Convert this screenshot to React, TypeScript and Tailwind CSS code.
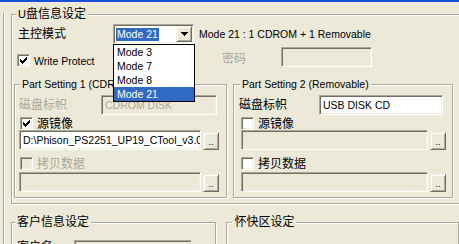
import React from "react";

const sunken =
  "border border-t-[#ACA899] border-l-[#ACA899] border-b-white border-r-white shadow-[inset_1px_1px_0_#716F64,inset_-1px_-1px_0_#F1EFE2]";
const raised =
  "border border-t-[#F1EFE2] border-l-[#F1EFE2] border-b-[#716F64] border-r-[#716F64] shadow-[inset_1px_1px_0_#fff,inset_-1px_-1px_0_#ACA899]";
const etched = "border border-[#ACA899] shadow-[inset_1px_1px_0_#fff,1px_1px_0_#fff]";

function Check({ checked, disabled }: { checked?: boolean; disabled?: boolean }) {
  return (
    <div
      className={`w-[13px] h-[13px] shrink-0 flex items-center justify-center ${sunken} ${
        disabled ? "bg-[#ECE9D8]" : "bg-white"
      }`}
    >
      {checked && (
        <svg width="7" height="7" viewBox="0 0 7 7" shapeRendering="crispEdges">
          <path d="M6 0h1v3h-1zM5 1h1v3h-1zM4 2h1v3h-1zM3 3h1v3h-1zM2 4h1v3h-1zM1 3h1v3h-1zM0 2h1v3h-1z" fill="#000" />
        </svg>
      )}
    </div>
  );
}

function Btn() {
  return (
    <div className={`w-[16px] h-[18px] shrink-0 bg-[#ECE9D8] flex items-end justify-center ${raised}`}>
      <span className="text-[9px] leading-[12px] mb-[1px] text-black">..</span>
    </div>
  );
}

function Field({
  w,
  text,
  disabled,
}: {
  w: string;
  text?: string;
  disabled?: boolean;
}) {
  return (
    <div
      className={`${w} h-[20px] shrink-0 flex items-center overflow-hidden whitespace-nowrap pl-[3px] ${sunken} ${
        disabled ? "bg-[#ECE9D8] text-[#ACA899]" : "bg-white text-black"
      }`}
    >
      <span className="text-[10.5px] leading-[14px]">{text}</span>
    </div>
  );
}

function Title({ children, left }: { children: React.ReactNode; left: string }) {
  return (
    <span
      className={`absolute -top-[8px] ${left} px-[2px] bg-[#ECE9D8] leading-[14px] whitespace-nowrap text-black`}
    >
      {children}
    </span>
  );
}

export default function App() {
  return (
    <div className="w-[459px] h-[244px] overflow-hidden bg-[#ECE9D8] flex flex-col font-['Liberation_Sans','Noto_Sans_CJK_SC',sans-serif] text-[10.5px] text-black">
      <div className="h-[2px] shrink-0 bg-[#1B4FD8]" />
      <div className="mt-[11px] ml-[3px] flex-1 flex flex-col border-l border-[#ACA899] shadow-[inset_1px_0_0_#fff] pl-[7px] pt-[1px]">
        {/* U盘信息设定 */}
        <div className={`relative w-[470px] h-[190px] shrink-0 flex flex-col ${etched}`}>
          <Title left="left-[4px]">
            <span className="text-[11px]">U</span>
            <span className="text-[12px]">盘信息设定</span>
          </Title>

          {/* row 1 */}
          <div className="mt-[9px] ml-[6px] h-[20px] flex items-center">
            <span className="w-[95px] text-[12px] leading-[14px]">主控模式</span>
            <div className="relative w-[81px] h-[20px] z-10">
              <div className={`w-full h-full bg-white flex items-center justify-between ${sunken}`}>
                <span className="ml-[2px] px-[1px] bg-[#316AC5] text-white leading-[13px]">Mode 21</span>
                <div className={`w-[16px] h-[16px] mr-[1px] bg-[#ECE9D8] flex items-center justify-center ${raised}`}>
                  <svg width="7" height="4" viewBox="0 0 7 4" shapeRendering="crispEdges">
                    <path d="M0 0h7v1h-7zM1 1h5v1h-5zM2 2h3v1h-3zM3 3h1v1h-1z" fill="#000" />
                  </svg>
                </div>
              </div>
              <div className="absolute left-0 top-[20px] w-[82px] border border-black bg-white flex flex-col">
                <div className="h-[14px] leading-[14px] pl-[3px]">Mode 3</div>
                <div className="h-[14px] leading-[14px] pl-[3px]">Mode 7</div>
                <div className="h-[14px] leading-[14px] pl-[3px]">Mode 8</div>
                <div className="h-[14px] leading-[14px] pl-[3px] bg-[#316AC5] text-white">Mode 21</div>
              </div>
            </div>
            <span className="ml-[5px] leading-[14px] whitespace-nowrap">Mode 21 : 1 CDROM + 1 Removable</span>
          </div>

          {/* row 2 */}
          <div className="mt-[3px] ml-[5px] h-[20px] flex">
            <div className="mt-[7px] w-[205px] h-[13px] flex items-center">
              <Check checked />
              <span className="ml-[4px] leading-[14px]">Write Protect</span>
            </div>
            <span className="mt-[5px] w-[59px] text-[12px] leading-[14px] text-[#ACA899]">密码</span>
            <Field w="w-[91px]" disabled />
          </div>

          {/* part settings */}
          <div className="mt-[17px] ml-[2px] flex">
            <div className={`relative w-[213px] h-[114px] flex flex-col ${etched}`}>
              <Title left="left-[5px]">Part Setting 1 (CDROM)</Title>
              <div className="mt-[10px] ml-[4px] h-[20px] flex items-center">
                <span className="w-[82px] text-[12px] leading-[14px] text-[#ACA899]">磁盘标帜</span>
                <Field w="w-[116px]" text="CDROM DISK" disabled />
              </div>
              <div className="mt-[2px] ml-[5px] h-[13px] flex items-center">
                <Check checked />
                <span className="ml-[4px] text-[12px] leading-[14px]">源镜像</span>
              </div>
              <div className="ml-[4px] h-[20px] flex items-end">
                <Field w="w-[182px]" text="D:\Phison_PS2251_UP19_CTool_v3.0\Image\CDROM.iso" />
                <div className="ml-[2px]">
                  <Btn />
                </div>
              </div>
              <div className="mt-[7px] ml-[5px] h-[13px] flex items-center">
                <Check disabled />
                <span className="ml-[4px] text-[12px] leading-[14px] text-[#ACA899]">拷贝数据</span>
              </div>
              <div className="mt-[2px] ml-[4px] h-[20px] flex items-end">
                <Field w="w-[182px]" disabled />
                <div className="ml-[2px]">
                  <Btn />
                </div>
              </div>
            </div>

            <div className={`relative ml-[6px] w-[220px] h-[114px] flex flex-col ${etched}`}>
              <Title left="left-[6px]">Part Setting 2 (Removable)</Title>
              <div className="mt-[10px] ml-[5px] h-[20px] flex items-center">
                <span className="w-[80px] text-[12px] leading-[14px]">磁盘标帜</span>
                <Field w="w-[124px]" text="USB DISK CD" />
              </div>
              <div className="mt-[2px] ml-[7px] h-[13px] flex items-center">
                <Check />
                <span className="ml-[4px] text-[12px] leading-[14px]">源镜像</span>
              </div>
              <div className="ml-[7px] h-[20px] flex items-end">
                <Field w="w-[187px]" disabled />
                <div className="ml-[2px]">
                  <Btn />
                </div>
              </div>
              <div className="mt-[7px] ml-[7px] h-[13px] flex items-center">
                <Check />
                <span className="ml-[4px] text-[12px] leading-[14px]">拷贝数据</span>
              </div>
              <div className="mt-[2px] ml-[7px] h-[20px] flex items-end">
                <Field w="w-[187px]" disabled />
                <div className="ml-[2px]">
                  <Btn />
                </div>
              </div>
            </div>
          </div>
        </div>

        {/* bottom groups */}
        <div className="mt-[18px] flex shrink-0">
          <div className={`relative w-[212px] h-[40px] flex flex-col ${etched}`}>
            <Title left="left-[3px]">
              <span className="text-[12px]">客户信息设定</span>
            </Title>
            <div className="mt-[17px] ml-[5px] flex">
              <span className="w-[57px] text-[12px] leading-[14px]">客户名</span>
              <Field w="w-[118px]" disabled />
            </div>
          </div>
          <div className={`relative ml-[10px] w-[240px] h-[40px] ${etched}`}>
            <Title left="left-[5px]">
              <span className="text-[12px]">怀快区设定</span>
            </Title>
          </div>
        </div>
      </div>
    </div>
  );
}
